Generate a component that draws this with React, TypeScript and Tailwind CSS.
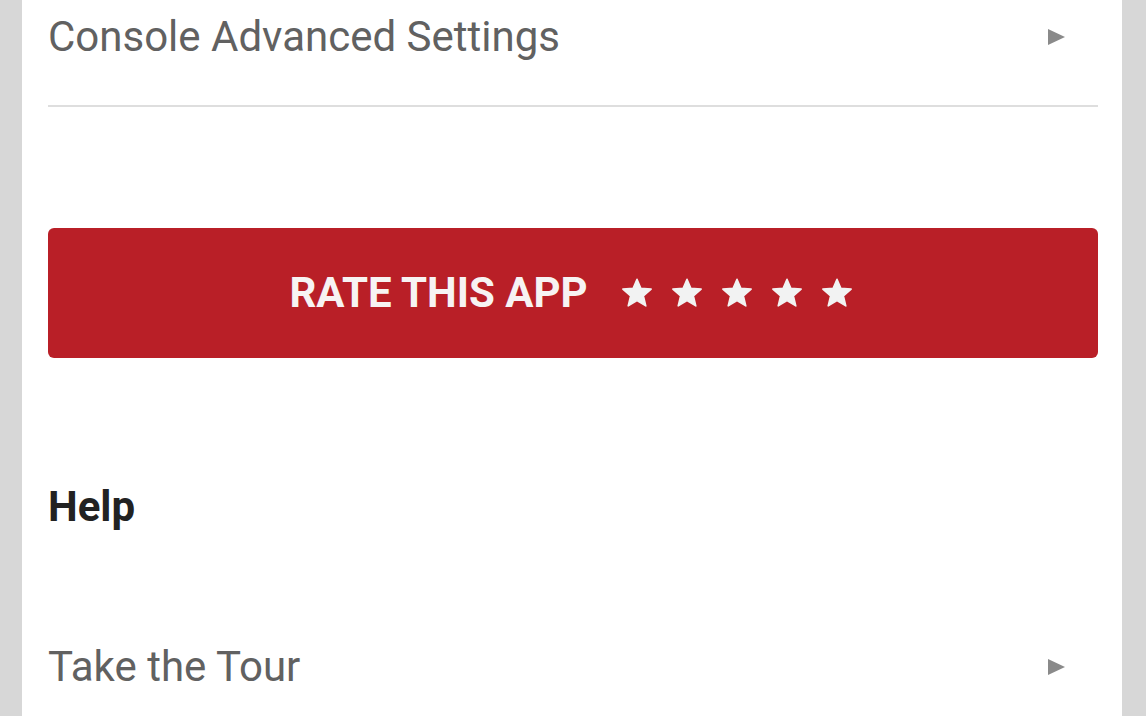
import type { ReactNode } from "react";

function Arrow() {
  return (
    <svg width="17" height="16" viewBox="0 0 17 16" className="shrink-0">
      <path d="M0 0 L17 8 L0 16 Z" fill="#8a8a8a" />
    </svg>
  );
}

function Star() {
  return (
    <svg width="32" height="31" viewBox="0 0 24 23" className="shrink-0">
      <path
        d="M12 0.8 L14.9 7.6 L22.6 8.2 L16.8 13.3 L18.6 20.8 L12 16.8 L5.4 20.8 L7.2 13.3 L1.4 8.2 L9.1 7.6 Z"
        fill="#f2f2f2"
        stroke="#f2f2f2"
        strokeWidth="1.2"
        strokeLinejoin="round"
      />
    </svg>
  );
}

function Row({ children }: { children: ReactNode }) {
  return (
    <div className="flex items-center justify-between">
      <span className="text-[42px] leading-[48px] text-[#616161]">{children}</span>
      <span className="mr-[33px]">
        <Arrow />
      </span>
    </div>
  );
}

export default function App() {
  return (
    <div
      className="h-[716px] w-full overflow-hidden bg-[#d7d7d7] pl-[22px] pr-[24px]"
      style={{ fontFamily: "Roboto, 'Liberation Sans', sans-serif" }}
    >
      <div className="flex h-full flex-col bg-white pl-[26px] pr-[24px]">
        <div className="pt-[13px]">
          <Row>Console Advanced Settings</Row>
        </div>
        <div className="mt-[44px] h-[2px] bg-[#dedede]" />

        <button className="mt-[121px] flex h-[130px] w-full items-center justify-center rounded-[6px] bg-[#b91f27] pr-[4px]">
          <span className="text-[42px] font-bold leading-[48px] text-[#f7f3f3]">RATE THIS APP</span>
          <span className="ml-[33px] flex gap-[18px]">
            <Star />
            <Star />
            <Star />
            <Star />
            <Star />
          </span>
        </button>

        <h2 className="mt-[125px] text-[42px] font-bold leading-[48px] text-[#222222]">Help</h2>

        <div className="mt-[112px]">
          <Row>Take the Tour</Row>
        </div>
      </div>
    </div>
  );
}
